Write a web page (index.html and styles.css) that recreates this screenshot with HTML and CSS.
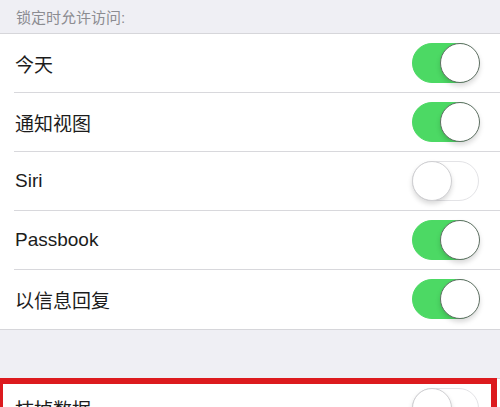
FILE: index.html
```html
<!DOCTYPE html>
<html lang="zh-CN">
<head>
    <meta charset="UTF-8">
    <meta name="viewport" content="width=device-width, initial-scale=1.0">
    <title>密码设置</title>
    <link rel="stylesheet" href="styles.css">
</head>
<body>
    <div class="section-header">锁定时允许访问:</div>

    <div class="group">
        <div class="row">
            <span class="label">今天</span>
            <div class="switch on"><div class="knob"></div></div>
        </div>
        <div class="row">
            <span class="label">通知视图</span>
            <div class="switch on"><div class="knob"></div></div>
        </div>
        <div class="row">
            <span class="label">Siri</span>
            <div class="switch"><div class="knob"></div></div>
        </div>
        <div class="row">
            <span class="label">Passbook</span>
            <div class="switch on"><div class="knob"></div></div>
        </div>
        <div class="row">
            <span class="label">以信息回复</span>
            <div class="switch on"><div class="knob"></div></div>
        </div>
    </div>

    <!-- Erase data (highlighted) -->
    <div class="group group-erase">
        <div class="row">
            <span class="label">抹掉数据</span>
            <div class="switch"><div class="knob"></div></div>
        </div>
        <div class="highlight"></div>
    </div>
</body>
</html>
```

FILE: styles.css
```css
body {
    margin: 0;
    background-color: #efeff4;
    font-family: "Liberation Sans", "Noto Sans CJK SC", sans-serif;
    color: #1c1c1c;
    overflow: hidden;
}

.section-header {
    height: 33px;
    display: flex;
    align-items: center;
    padding-left: 16px;
    font-size: 15px;
    color: #8c8c91;
}

.group {
    background-color: #fff;
    border-top: 1px solid #d6d6da;
    border-bottom: 1px solid #d6d6da;
}

.group-erase {
    position: relative;
    margin-top: 48px;
    height: 80px;
}

.row {
    position: relative;
    height: 58px;
    display: flex;
    align-items: center;
    justify-content: space-between;
    padding: 0 21px 0 15px;
    border-bottom: 1px solid transparent;
}

.row:not(:last-child)::after {
    content: "";
    position: absolute;
    left: 14px;
    right: 0;
    bottom: -1px;
    height: 1px;
    background-color: #d8d8dc;
}

.label {
    font-size: 19px;
}

.switch {
    position: relative;
    width: 67px;
    height: 40px;
    box-sizing: border-box;
    border-radius: 20px;
    border: 1.5px solid #e3e3e6;
    background-color: #fff;
}

.switch.on {
    background-color: #4cd964;
    border-color: #4cd964;
}

.knob {
    position: absolute;
    top: -1.5px;
    left: -1.5px;
    width: 40px;
    height: 40px;
    box-sizing: border-box;
    border-radius: 50%;
    background-color: #fff;
    border: 1.5px solid #cfcfd2;
    box-shadow: 0 3px 5px rgba(0,0,0,0.15);
}

.switch.on .knob {
    left: auto;
    right: -1.5px;
    border-color: #5f6f63;
}

.highlight {
    position: absolute;
    top: -1px;
    left: -3px;
    right: 3px;
    height: 120px;
    border: 6px solid #dc1a1e;
}
```
